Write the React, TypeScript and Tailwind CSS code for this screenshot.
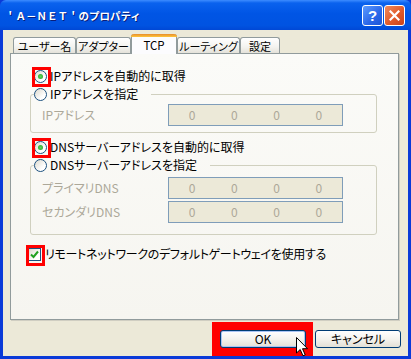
import React from "react";

const F = "font-['Noto_Sans_CJK_JP','Noto_Sans',sans-serif]";
const P = "[font-feature-settings:'palt']";

function Radio({ checked, red }: { checked?: boolean; red?: boolean }) {
  return (
    <span className="relative inline-flex w-[13px] h-[13px] shrink-0 items-center justify-center rounded-full border border-[#1c5180] bg-[linear-gradient(135deg,#dcd9cd,#ffffff_70%)]">
      {checked && <span className="w-[5px] h-[5px] rounded-full bg-[radial-gradient(circle,#5fd35f,#21a121)]" />}
      {red && <span className="absolute left-[-3px] top-[-4px] w-[19px] h-[20px] border-[3px] border-[#ff0000]" />}
    </span>
  );
}

function IpBox() {
  return (
    <div className="w-[175px] h-[22px] border border-[#7f9db9] bg-[#ece9d8] grid grid-cols-4 px-[2px] items-center text-[12px] leading-[16px] text-[#aca899]">
      <span className="text-center">0</span>
      <span className="text-center">0</span>
      <span className="text-center">0</span>
      <span className="text-center">0</span>
    </div>
  );
}

function Tab({ label, w, selected }: { label: string; w: string; selected?: boolean }) {
  if (selected) {
    return (
      <div className={`${w} relative z-10 mb-[-1px] h-[20px] flex items-start justify-center pt-[2px] bg-[#fcfcfe] border-x border-[#919b9c] rounded-t-[3px] text-[11.5px] leading-[16px] text-black whitespace-nowrap`}>
        <span className="absolute left-[-1px] right-[-1px] top-0 h-[3px] rounded-t-[3px] bg-[linear-gradient(#e68b2c,#ffc73c)]" />
        <span className="mt-[1px]">{label}</span>
      </div>
    );
  }
  return (
    <div className={`${w} h-[16px] flex items-center justify-center border border-b-0 border-[#919b9c] rounded-t-[3px] bg-[linear-gradient(#ffffff,#f3f3ef_60%,#e4e2da)] text-[11px] leading-[16px] text-black whitespace-nowrap`}>
      {label}
    </div>
  );
}

export default function App() {
  return (
    <div className={`${F} w-[411px] h-[359px] flex flex-col bg-[#0a3ad8] overflow-hidden`}>
      {/* title bar */}
      <div className="h-[30px] shrink-0 flex items-center pl-[5px] pr-[6px] bg-[linear-gradient(#3d8cff_0%,#0a62ee_10%,#0055e5_45%,#0053e1_85%,#0048d6_100%)] rounded-t-[6px]">
        <span className="text-[10.5px] leading-[14px] font-bold text-white [text-shadow:1px_1px_0_#0a1e7a] mt-[2px]">
          ＇Ａ－ＮＥＴ＇のプロパティ
        </span>
        <div className="ml-auto flex gap-[1px] items-center">
          <div className="w-[21px] h-[21px] rounded-[3px] border border-white bg-[linear-gradient(135deg,#5c9bff,#2a66e8_60%,#1d55d6)] flex items-center justify-center">
            <span className="text-white font-bold text-[15px] leading-[15px] font-['Liberation_Sans',sans-serif]">?</span>
          </div>
          <div className="w-[21px] h-[21px] rounded-[3px] border border-white bg-[linear-gradient(135deg,#f08a5c,#e15a2a_55%,#c8421b)] flex items-center justify-center">
            <svg width="11" height="11" viewBox="0 0 11 11">
              <path d="M1.5 1.5 L9.5 9.5 M9.5 1.5 L1.5 9.5" stroke="white" strokeWidth="2.2" strokeLinecap="square" />
            </svg>
          </div>
        </div>
      </div>

      {/* body */}
      <div className={`flex-1 mx-[3px] mb-[3px] bg-[#ece9d8] pl-[7px] flex flex-col ${P}`}>
        <div className="mt-[4px] h-[19px] flex items-end pl-[3px]">
          <Tab label="ユーザー名" w="w-[63px]" />
          <Tab label="アダプター" w="w-[55px]" />
          <Tab label="TCP" w="w-[46px]" selected />
          <Tab label="ルーティング" w="w-[63px]" />
          <Tab label="設定" w="w-[40px]" />
        </div>

        <div className="w-[389px] h-[267px] shrink-0 border border-[#919b9c] bg-[linear-gradient(#fbfbf8,#f6f5f0)] shadow-[1px_1px_0_#d0cec2] flex flex-col pl-[19px] pt-[14px] text-[12px] leading-[16px] text-black">
          <div className="h-[16px] flex items-center ml-[4px]">
            <Radio checked red />
            <span className="ml-[3px]">IPアドレスを自動的に取得</span>
          </div>

          <fieldset className="mt-[2px] w-[347px] border border-[#d0d0bf] rounded-[3px] pl-[3px] pb-[6px]">
            <legend className="pr-[13px]">
              <div className="h-[16px] flex items-center">
                <Radio />
                <span className="ml-[3px]">IPアドレスを指定</span>
              </div>
            </legend>
            <div className="mt-[2px] flex items-center">
              <span className="w-[134px] pl-[8px] text-[#aca899]">IPアドレス</span>
              <IpBox />
            </div>
          </fieldset>

          <div className="mt-[6px] h-[16px] flex items-center ml-[4px]">
            <Radio checked red />
            <span className="ml-[3px]">DNSサーバーアドレスを自動的に取得</span>
          </div>

          <fieldset className="mt-[2px] w-[347px] border border-[#d0d0bf] rounded-[3px] pl-[3px] pb-[11px]">
            <legend className="pr-[13px]">
              <div className="h-[16px] flex items-center">
                <Radio />
                <span className="ml-[3px]">DNSサーバーアドレスを指定</span>
              </div>
            </legend>
            <div className="mt-[4px] flex items-center">
              <span className="w-[134px] pl-[8px] text-[#aca899]">プライマリDNS</span>
              <IpBox />
            </div>
            <div className="mt-[2px] flex items-center">
              <span className="w-[134px] pl-[8px] text-[#aca899]">セカンダリDNS</span>
              <IpBox />
            </div>
          </fieldset>

          <div className="mt-[11px] h-[16px] flex items-center ml-[-2px]">
            <span className="relative w-[13px] h-[13px] shrink-0 border border-[#1c5180] bg-[linear-gradient(135deg,#dcd9cd,#ffffff_70%)] flex items-center justify-center">
              <svg width="9" height="9" viewBox="0 0 9 9">
                <path d="M1 4.5 L3.5 7 L8 1.5" fill="none" stroke="#21a121" strokeWidth="2" />
              </svg>
              <span className="absolute left-[-3px] top-[-4px] w-[19px] h-[21px] border-[3px] border-[#ff0000]" />
            </span>
            <span className="ml-[4px] tracking-[-0.3px]">リモートネットワークのデフォルトゲートウェイを使用する</span>
          </div>
        </div>

        {/* footer */}
        <div className="mt-[2px] flex justify-end items-start pr-[7px]">
          <div className="bg-[#ff0000] pt-[8px] pl-[8px] pr-[7px] pb-[8px]">
            <div className="relative w-[86px] h-[18px] rounded-[3px] border border-[#003c74] bg-[linear-gradient(#ffffff,#f4f3ee_50%,#e3e0d6)] shadow-[inset_0_0_0_1px_#a9c4f5] flex items-center justify-center text-[12px] leading-[14px] text-black">
              OK
              <svg className="absolute left-[75px] top-[6px]" width="13" height="20" viewBox="0 0 13 20">
                <path d="M0.5 0.5 L0.5 16 L4.2 12.5 L7 18.8 L9.2 17.8 L6.5 11.7 L11.5 11.7 Z" fill="white" stroke="black" strokeWidth="1" strokeLinejoin="miter" />
              </svg>
            </div>
          </div>
          <div className="mt-[8px] ml-[2px] w-[86px] h-[18px] rounded-[3px] border border-[#003c74] bg-[linear-gradient(#ffffff,#f4f3ee_50%,#e3e0d6)] flex items-center justify-center text-[12px] leading-[14px] text-black">
            キャンセル
          </div>
        </div>
      </div>
    </div>
  );
}
